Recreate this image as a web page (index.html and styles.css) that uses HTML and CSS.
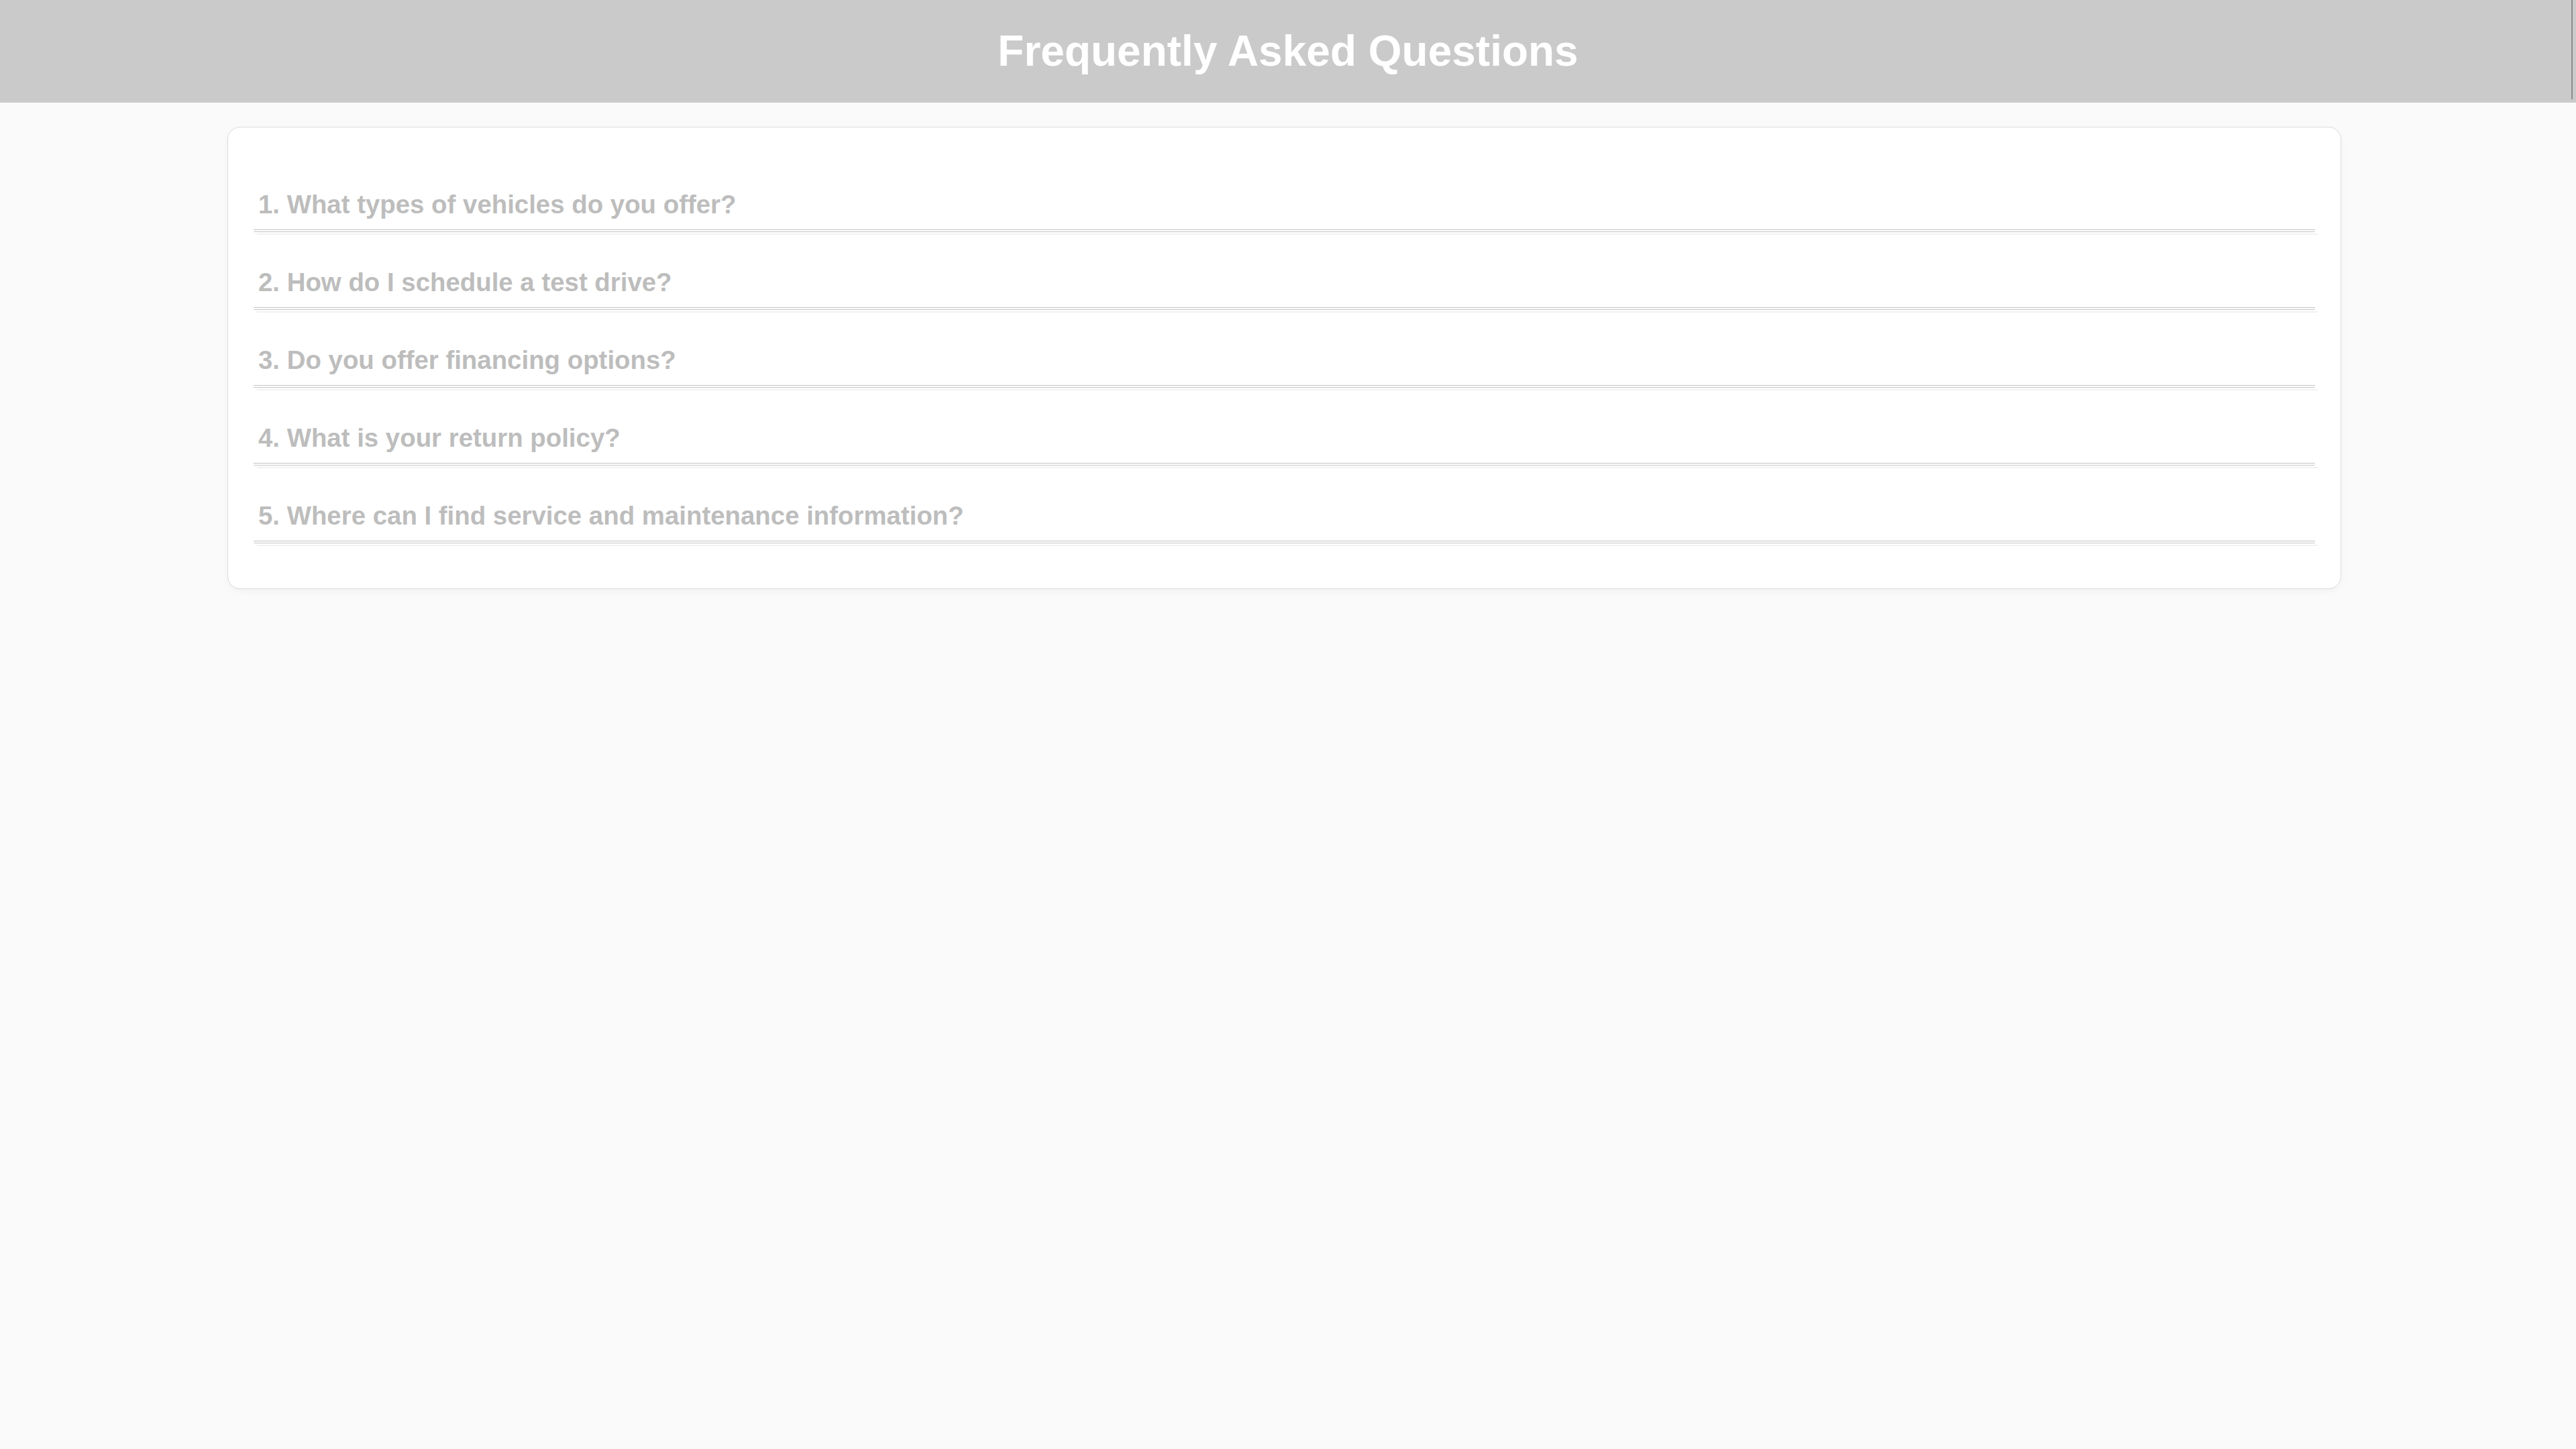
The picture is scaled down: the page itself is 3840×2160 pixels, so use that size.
FILE: index.html
```html
<!DOCTYPE html>
<html lang="en">
<head>
<meta charset="utf-8">
<title>Frequently Asked Questions</title>
<link rel="stylesheet" href="styles.css">
</head>
<body>
<header class="site-header">
  <h1 class="site-title">Frequently Asked Questions</h1>
</header>
<main class="faq-card">
  <ul class="faq-list">
    <li class="faq-item"><button class="faq-question">1. What types of vehicles do you offer?</button></li>
    <li class="faq-item"><button class="faq-question">2. How do I schedule a test drive?</button></li>
    <li class="faq-item"><button class="faq-question">3. Do you offer financing options?</button></li>
    <li class="faq-item"><button class="faq-question">4. What is your return policy?</button></li>
    <li class="faq-item"><button class="faq-question">5. Where can I find service and maintenance information?</button></li>
  </ul>
</main>
</body>
</html>
```
FILE: styles.css
```css
html, body {
  margin: 0;
  padding: 0;
}

body {
  background: #fafafa;
  font-family: "Liberation Sans", Arial, sans-serif;
  min-height: 2160px;
}

.site-header {
  position: relative;
  background: #cacaca;
  padding: 40px 0;
  text-align: center;
}

.site-header::after {
  content: "";
  position: absolute;
  top: 0;
  right: 5px;
  width: 2px;
  height: 148px;
  background: #8c8c8c;
}

.site-title {
  margin: 0;
  color: #ffffff;
  font-size: 64px;
  line-height: 73px;
  font-weight: 700;
}

.faq-card {
  display: block;
  box-sizing: border-box;
  width: 3151px;
  margin: 36px 0 0 339px;
  padding: 67px 38px 40px;
  background: #ffffff;
  border: 1px solid #dcdcdc;
  border-radius: 19px;
  box-shadow: 0 4px 12px rgba(0, 0, 0, 0.035);
}

.faq-list {
  list-style: none;
  margin: 0;
  padding: 0;
}

.faq-item {
  margin: 0 0 23px;
}

.faq-item::after {
  content: "";
  display: block;
  height: 2px;
  margin: 2px -4px 0 5px;
  background: #f1f1f1;
}

.faq-question {
  display: block;
  width: 100%;
  box-sizing: border-box;
  margin: 0;
  padding: 26px 7px 15px;
  background: transparent;
  border: 0;
  border-bottom: 4px double #c4c4c4;
  border-radius: 2px;
  text-align: left;
  font-family: "Liberation Sans", Arial, sans-serif;
  font-size: 38.4px;
  line-height: 44px;
  font-weight: 700;
  color: #bdbdbd;
  cursor: pointer;
}
```
